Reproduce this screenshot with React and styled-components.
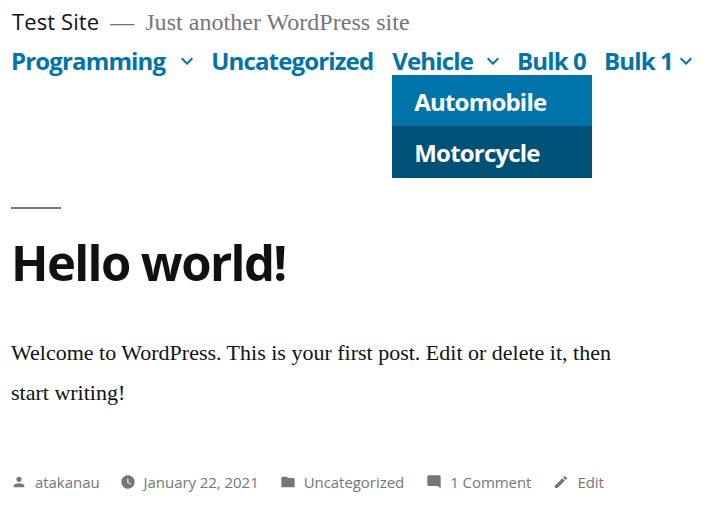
import React from "react"
import styled, { createGlobalStyle } from "styled-components"

const GlobalStyle = createGlobalStyle`
  html, body {
    margin: 0;
    background: #fff;
  }
  body {
    font-family: "Open Sans", "Noto Sans", sans-serif;
    color: #111;
  }
`

const Page = styled.div`
  width: 716px;
  height: 528px;
  padding: 5px 0 0 11px;
  box-sizing: border-box;
  overflow: hidden;
`

const Branding = styled.div`
  display: flex;
  align-items: baseline;
  height: 32px;
  line-height: 32px;
`

const SiteTitle = styled.a`
  margin-left: 1px;
  font-size: 22px;
  letter-spacing: 0.1px;
  color: #111;
`

const Dash = styled.span`
  margin-left: 11px;
  font-family: "Liberation Serif", serif;
  font-size: 24px;
  color: #767676;
`

const Description = styled.span`
  margin-left: 11px;
  font-family: "Liberation Serif", serif;
  font-size: 24px;
  letter-spacing: 0.03px;
  color: #767676;
`

const Nav = styled.nav`
  display: flex;
  margin-top: 5px;
  height: 36px;
  align-items: center;
`

const NavItem = styled.div`
  position: relative;
  display: flex;
  align-items: center;
  margin-right: ${(p) => p.$gap}px;
`

const NavLink = styled.a`
  font-size: 24px;
  font-weight: 700;
  letter-spacing: -0.85px;
  color: #0073aa;
  white-space: nowrap;
`

const Chevron = styled.svg`
  width: 24px;
  height: 24px;
  margin: 1px 0 0 ${(p) => p.$left}px;
  fill: #0073aa;
`

const Submenu = styled.ul`
  position: absolute;
  top: 31px;
  left: 0;
  width: 200px;
  margin: 0;
  padding: 0;
  list-style: none;
`

const SubItem = styled.li`
  height: 51.5px;
  line-height: 54px;
  padding-left: 22px;
  font-size: 24px;
  font-weight: 700;
  letter-spacing: -0.8px;
  color: #fff;
  background: ${(p) => (p.$active ? "#005177" : "#0073aa")};
`

const Post = styled.article`
  margin-top: 129px;
`

const Rule = styled.hr`
  width: 50px;
  height: 2px;
  margin: 0;
  border: 0;
  background: #767676;
`

const Title = styled.h1`
  margin: 22px 0 0;
  font-size: 49px;
  line-height: 62px;
  font-weight: 700;
  letter-spacing: -1.6px;
  color: #111;
`

const Body = styled.p`
  width: 620px;
  margin: 40px 0 0;
  font-family: "Liberation Serif", serif;
  font-size: 22px;
  line-height: 40px;
  color: #111;
`

const Meta = styled.footer`
  display: flex;
  align-items: center;
  margin-top: 57px;
  height: 24px;
  font-size: 15px;
  letter-spacing: -0.05px;
  color: #767676;
`

const MetaItem = styled.span`
  display: flex;
  align-items: center;
  margin-right: ${(p) => p.$gap}px;
  white-space: nowrap;
`

const MetaIcon = styled.svg`
  width: 16px;
  height: 16px;
  margin-right: 8px;
  fill: #767676;
`

const icons = {
  person: "M12 12c2.21 0 4-1.79 4-4s-1.79-4-4-4-4 1.79-4 4 1.79 4 4 4zm0 2c-2.67 0-8 1.34-8 4v2h16v-2c0-2.66-5.33-4-8-4z",
  clock: "M12 2C6.5 2 2 6.5 2 12s4.5 10 10 10 10-4.5 10-10S17.5 2 12 2zm4.2 14.2L11 13V7h1.5v5.2l4.5 2.7-.8 1.3z",
  folder: "M10 4H4c-1.1 0-1.99.9-1.99 2L2 18c0 1.1.9 2 2 2h16c1.1 0 2-.9 2-2V8c0-1.1-.9-2-2-2h-8l-2-2z",
  comment: "M21.99 4c0-1.1-.89-2-1.99-2H4c-1.1 0-2 .9-2 2v12c0 1.1.9 2 2 2h14l4 4-.01-18z",
  edit: "M3 17.25V21h3.75L17.81 9.94l-3.75-3.75L3 17.25zM20.71 7.04c.39-.39.39-1.02 0-1.41l-2.34-2.34c-.39-.39-1.02-.39-1.41 0l-1.83 1.83 3.75 3.75 1.83-1.83z",
}

const Down = ({ left }) => (
  <Chevron $left={left} viewBox="0 0 24 24">
    <path d="M7.41 8.59L12 13.17l4.59-4.58L18 10l-6 6-6-6 1.41-1.41z" />
  </Chevron>
)

const metaItems = [
  ["person", "atakanau", 20],
  ["clock", "January 22, 2021", 21],
  ["folder", "Uncategorized", 22],
  ["comment", "1 Comment", 22],
  ["edit", "Edit", 0],
]

export default function App() {
  return (
    <Page>
      <GlobalStyle />
      <Branding>
        <SiteTitle>Test Site</SiteTitle>
        <Dash>—</Dash>
        <Description>Just another WordPress site</Description>
      </Branding>
      <Nav>
        <NavItem $gap={12}>
          <NavLink>Programming</NavLink>
          <Down left={10} />
        </NavItem>
        <NavItem $gap={19}>
          <NavLink>Uncategorized</NavLink>
        </NavItem>
        <NavItem $gap={12}>
          <NavLink>Vehicle</NavLink>
          <Down left={8} />
          <Submenu>
            <SubItem>Automobile</SubItem>
            <SubItem $active>Motorcycle</SubItem>
          </Submenu>
        </NavItem>
        <NavItem $gap={18}>
          <NavLink>Bulk 0</NavLink>
        </NavItem>
        <NavItem $gap={0}>
          <NavLink>Bulk 1</NavLink>
          <Down left={1} />
        </NavItem>
      </Nav>
      <Post>
        <Rule />
        <Title>Hello world!</Title>
        <Body>Welcome to WordPress. This is your first post. Edit or delete it, then start writing!</Body>
        <Meta>
          {metaItems.map(([icon, label, gap]) => (
            <MetaItem key={icon} $gap={gap}>
              <MetaIcon viewBox="0 0 24 24">
                <path d={icons[icon]} />
              </MetaIcon>
              {label}
            </MetaItem>
          ))}
        </Meta>
      </Post>
    </Page>
  )
}
